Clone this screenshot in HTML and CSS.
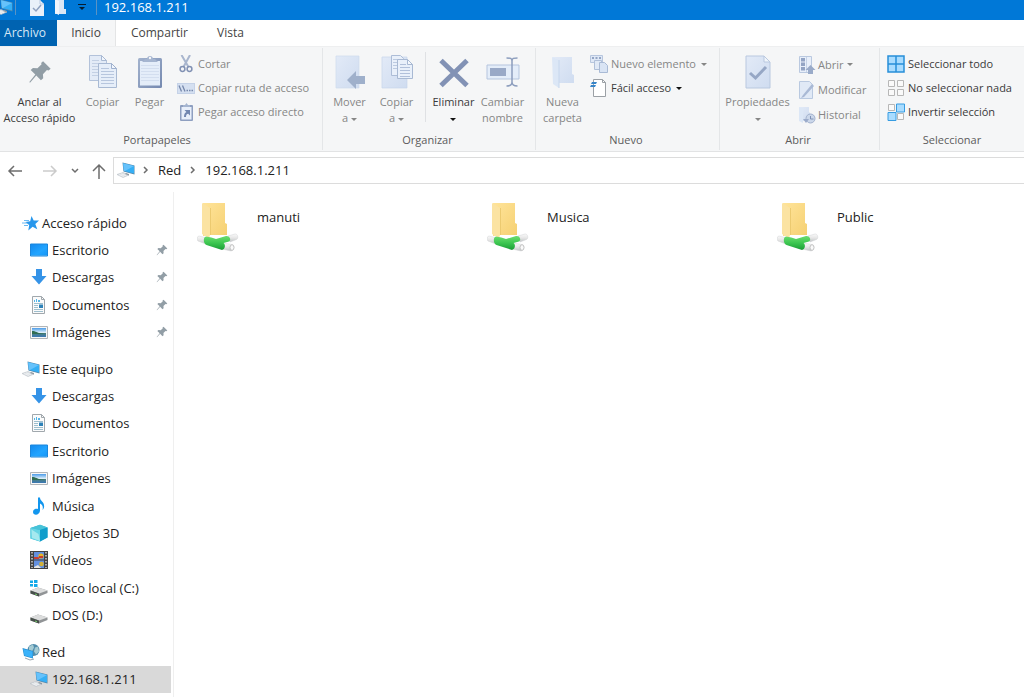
FILE: index.html
```html
<!DOCTYPE html>
<html lang="es">
<head>
<meta charset="utf-8">
<title>192.168.1.211</title>
<link rel="stylesheet" href="styles.css">
</head>
<body>
<svg class="sprite" aria-hidden="true">
  <defs>
    <linearGradient id="g-blue" x1="0" y1="0" x2="1" y2="1"><stop offset="0" stop-color="#1389ee"/><stop offset=".6" stop-color="#22a5ff"/><stop offset="1" stop-color="#1595f6"/></linearGradient>
    <linearGradient id="g-pale" x1="0" y1="0" x2="1" y2="1"><stop offset="0" stop-color="#e2eaf7"/><stop offset="1" stop-color="#cfdcf0"/></linearGradient>
    <linearGradient id="g-frame" x1="0" y1="0" x2="1" y2="1"><stop offset="0" stop-color="#a3b3ce"/><stop offset="1" stop-color="#7589b0"/></linearGradient>
    <linearGradient id="g-folder" x1="0" y1="0" x2="1" y2="1"><stop offset="0" stop-color="#ffe49a"/><stop offset="1" stop-color="#f5d072"/></linearGradient>
    <linearGradient id="g-green" x1="0" y1="0" x2="0" y2="1"><stop offset="0" stop-color="#6ddd70"/><stop offset=".5" stop-color="#3cc650"/><stop offset="1" stop-color="#1a9c36"/></linearGradient>
    <linearGradient id="g-pipe" x1="0" y1="0" x2="0" y2="1"><stop offset="0" stop-color="#fafafa"/><stop offset=".5" stop-color="#e6e6e6"/><stop offset="1" stop-color="#bfc2c4"/></linearGradient>
    <linearGradient id="g-photo" x1="0" y1="0" x2="0" y2="1"><stop offset="0" stop-color="#4b9be8"/><stop offset=".5" stop-color="#dceefa"/><stop offset=".55" stop-color="#4c8178"/><stop offset="1" stop-color="#3a78b8"/></linearGradient>
  </defs>
  <symbol id="pc" viewBox="0 0 18 18">
    <path d="M0 13.500l6-2 6 2.500-6 2.500z" fill="#dde2e6" stroke="#b9c0c6" stroke-width=".6"/><path d="M2 13.500l5 2M4 12.800l5 2" stroke="#f8f8f8" stroke-width=".6"/>
    <path d="M9 12l3 1v1.500L8 13z" fill="#8f99a2"/>
    <path d="M5.500 1.500l12 3v9l-11-3z" fill="#5487aa"/><path d="M6.100 2.300L17 5v7.600L7 9.900z" fill="#35aff5"/><path d="M6.100 2.300L17 5 8 10.100l-1-.2z" fill="#66c2fb"/>
  </symbol>
  <symbol id="pin" viewBox="0 0 18 18">
    <path d="M11.300 1l5.700 5.600-1.600 1.300-1.200-.4-3 3.100.2 3.100-1.700 1.500-3.500-3.500L1.500 17 1 16.500l4.500-5.600L2 7.500 3.700 6l3.400.2 3.100-3-.4-1z" fill="#929ea6"/>
  </symbol>
  <symbol id="sheet-copy" viewBox="0 0 30 34">
    <path d="M1.500.500h12l5 5v20h-17z" fill="#e3ebf7" stroke="#b3c2da"/><path d="M13.500.500v5h5z" fill="#f2f6fc" stroke="#a8b9d3"/>
    <path d="M4 5.500h7M4 8.500h11M4 11.500h11M4 14.500h11M4 17.500h11M4 20.500h11" stroke="#c3d0e4"/>
    <path d="M10.500 8.500h13l5 5v19h-18z" fill="#e6eef9" stroke="#a8b9d3"/><path d="M23.500 8.500v5h5z" fill="#f2f6fc" stroke="#9fb1ce"/>
    <path d="M13 13.500h8M13 16.500h13M13 19.500h13M13 22.500h13M13 25.500h13M13 28.500h13" stroke="#b7c6de"/>
  </symbol>
  <symbol id="clip" viewBox="0 0 26 34">
    <rect x="1" y="3" width="24" height="30" rx="1.500" fill="url(#g-frame)"/><rect x="3" y="6" width="20" height="24.500" fill="#e4edf9"/>
    <path d="M4 10.500h18M4 13.500h18M4 16.500h18M4 19.500h18M4 22.500h18M4 25.500h18" stroke="#d3deef"/><path d="M5 7l3-3h2c0-4 6-4 6 0h2l3 3z" fill="#a5b5d0"/><circle cx="13" cy="3" r="1.200" fill="#f5f6f8"/>
  </symbol>
  <symbol id="cut" viewBox="0 0 18 18"><path d="M4.500 0l7 12M13 0L6.500 12" stroke="#a9b6ce" stroke-width="2" fill="none"/><circle cx="5.500" cy="14" r="2.400" fill="none" stroke="#8292b4" stroke-width="1.500"/><circle cx="12.500" cy="14" r="2.400" fill="none" stroke="#8292b4" stroke-width="1.500"/></symbol>
  <symbol id="route" viewBox="0 0 18 18"><rect x=".5" y="4.500" width="17" height="10" fill="#d5e0f1" stroke="#c5d2e7"/><path d="M2 6.500l2.500 6M5.500 6.500l2.500 6" stroke="#7587ab" stroke-width="1.300"/><path d="M9.500 11.500h1.500M12 11.500h1.500M14.500 11.500h1.500" stroke="#7587ab" stroke-width="1.300"/></symbol>
  <symbol id="pastelink" viewBox="0 0 18 18"><rect x="3" y="2" width="13" height="16" rx="1" fill="#8e9fc0"/><rect x="4.500" y="4" width="10" height="12.500" fill="#e8effa"/><path d="M6 4V2h2l1.500-2L11 2h2v2z" fill="#a5b5d0"/><path d="M7.500 7H13v5.500l-1.800-1.800c-1.700.3-2.200 1.300-2.200 3.300H7c0-3 .8-4.200 2.400-5.100z" fill="#7287b0"/></symbol>
  <symbol id="move" viewBox="0 0 34 34"><path d="M3 1h23v32H3z" fill="url(#g-pale)" stroke="#cfdbed" stroke-width=".7"/><path d="M14 25l9-9v5h9v8h-9v5z" fill="#9fb0cb"/></symbol>
  <symbol id="copyto" viewBox="0 0 34 34"><path d="M2 2h25v31H2z" fill="url(#g-pale)" stroke="#c7d5eb" stroke-width=".7"/><path d="M11.500.500h9l3 3v17h-12z" fill="#e9f0fa" stroke="#adbdd7"/><path d="M13 4.500h6M13 7.500h6M13 10.500h5M13 13.500h5" stroke="#bccae0"/><path d="M17.500 4.500h10l5 5v14h-15z" fill="#e9f0fa" stroke="#a8b9d3"/><path d="M27.500 4.500v5h5z" fill="#f5f8fd" stroke="#a8b9d3"/><path d="M20 9.500h6M20 12.500h10M20 15.500h10M20 18.500h10M20 21.500h10" stroke="#b1c0da"/></symbol>
  <symbol id="delete" viewBox="0 0 34 34"><path d="M4 5.500l26 25M30 5.500l-26 25" stroke="#8292b5" stroke-width="5"/></symbol>
  <symbol id="rename" viewBox="0 0 34 34"><path d="M1 10h32v14H1z" fill="#e4edf9" stroke="#b5c5de"/><path d="M4 13h16v8H4z" fill="#99a9c7"/><path d="M20.500 3c4 0 5.500 0 5.500 3v21c0 3-1.500 4-5.500 4M31.500 3C27.500 3 26 3 26 6v21c0 3 1.500 4 5.500 4" fill="none" stroke="#8c9dbd" stroke-width="1.500"/></symbol>
  <symbol id="newfolder" viewBox="0 0 24 34"><path d="M2 2h19v17l2 1v8H8L2 29z" fill="url(#g-pale)"/><path d="M1 2l7 3v28l-6-4z" fill="#dce7f6"/><path d="M8 5v28" stroke="#c6d6ed"/></symbol>
  <symbol id="newitem" viewBox="0 0 18 18"><path d="M.5.500h12v7H.5z" fill="#dfe8f6" stroke="#b7c6de"/><path d="M2 2h2v2H2zM5.500 2h2v2h-2zM9 2h2v2H9z" fill="#93a5c5"/><path d="M4.500 5.500h7v9h-7z" fill="#e0e9f6" stroke="#b0c0d9"/><path d="M9.500 7.500h5l3 3v7h-8z" fill="#d9e4f4" stroke="#a9bad5"/></symbol>
  <symbol id="easy" viewBox="0 0 18 18"><path d="M3.500.500h9l3 3v14h-12z" fill="#fff" stroke="#9ba0a5"/><path d="M12.500.500v3h3" fill="none" stroke="#9ba0a5"/><path d="M2 3h5L6 5H1zM1 6h5L5 8H0z" fill="#3885c8"/></symbol>
  <symbol id="props" viewBox="0 0 26 34"><path d="M1 1h18l6 6v26H1z" fill="url(#g-pale)" stroke="#b9c8df"/><path d="M19 1v6h6z" fill="#f0f5fb" stroke="#b9c8df"/><path d="M5 18l5.500 5L21 12" fill="none" stroke="#96a7c5" stroke-width="3"/></symbol>
  <symbol id="open" viewBox="0 0 18 18"><path d="M1.500.500h12v16h-12z" fill="#e8effa" stroke="#bac9e0"/><path d="M3 2h4v3.500H3zM3 6.500h4v3.500H3zM3 11h4v3.500H3z" fill="#93a4c4"/><path d="M8.500 1v15" stroke="#c6d3e7"/><path d="M12.500 9l5 5H15v4h-5v-4H7.500z" fill="#9aabc9"/></symbol>
  <symbol id="edit" viewBox="0 0 18 18"><path d="M1.500.500h10l3 3v14h-13z" fill="#e0e9f6" stroke="#b9c9e0"/><path d="M5 14l-2 3 3-1L16 5l-2-2z" fill="#a9b9d5"/></symbol>
  <symbol id="history" viewBox="0 0 18 18"><path d="M1 1h10v5l1 1v8H1z" fill="url(#g-pale)"/><path d="M1 1l4 2v14l-4-2z" fill="#dce7f6"/><circle cx="12.500" cy="12.500" r="4.500" fill="#cbd7ea" stroke="#a1b1cd"/><path d="M12.500 10v3h3" fill="none" stroke="#7f91b5"/><path d="M5 13h6l-3 4z" fill="#9babca"/></symbol>
  <symbol id="selall" viewBox="0 0 18 18"><path d="M1 1h16v16H1z" fill="#a9dcff" stroke="#278fd9" stroke-width="1.500"/><path d="M9 1v16M1 9h16" stroke="#278fd9" stroke-width="1.500"/></symbol>
  <symbol id="selnone" viewBox="0 0 18 18"><path d="M1.500 1.500h6v6h-6zM10.500 1.500h6v6h-6zM1.500 10.500h6v6h-6zM10.500 10.500h6v6h-6z" fill="#fafafa" stroke="#b7b7b7"/></symbol>
  <symbol id="selinv" viewBox="0 0 18 18"><path d="M1.500 1.500h6v6h-6zM10.500 10.500h6v6h-6z" fill="#fafafa" stroke="#b7b7b7"/><path d="M9.500 1h8v8h-8zM1 9.500h8v8H1z" fill="#a9dcff" stroke="#369ce2"/></symbol>
  <symbol id="star" viewBox="0 0 18 18"><path d="M9.500 2l2.200 4.600 5.300-.2-3.700 3.700 2 5.100-4.700-2.400-4.300 3.600.9-5.300-4-3.100 5-.8z" fill="#2797ec"/><path d="M2 6.500h5M0 9h5M2 11.500h4" stroke="#6bb9f2"/></symbol>
  <symbol id="desktop" viewBox="0 0 18 18"><path d="M.5 3h17v12H.5z" fill="url(#g-blue)" stroke="#1a86dc"/><path d="M1 14.500h16" stroke="#3fa3ec"/></symbol>
  <symbol id="down" viewBox="0 0 18 18"><path d="M6 1h6v7h4.500L9 16.500 1.500 8H6z" fill="#3593e7"/></symbol>
  <symbol id="doc" viewBox="0 0 18 18"><path d="M2.500.500h9l3 3v14h-12z" fill="#fbfbfb" stroke="#a1a8ad"/><path d="M11.500.500v3h3" fill="none" stroke="#a1a8ad"/><path d="M4 6V4h1v2h1V3h1v3h1V4h2v2z" fill="#54b5e7"/><path d="M4 7.500h9M4 9.500h4M4 11.500h4M4 13.500h9M4 15.500h9" stroke="#9ebfce"/><path d="M9 8.500h4V12H9z" fill="#2e82b8"/></symbol>
  <symbol id="photo" viewBox="0 0 18 18"><path d="M.5 3.500h17v12H.5z" fill="#f7f7f7" stroke="#b1b5b8"/><path d="M2 5h14v9H2z" fill="url(#g-photo)"/><path d="M2 8c4 0 5 2 10 2.500l4 .5H2z" fill="#316d53"/></symbol>
  <symbol id="music" viewBox="0 0 18 18"><path d="M8 .500h2c0 4 5 4 4 10-.3 1-1 2-1.500 2.500 1-4-.5-5.500-2.500-6.500v7c0 5-7 5.500-7 1.500 0-3 3-3.500 5-3z" fill="#1296ee"/></symbol>
  <symbol id="cube" viewBox="0 0 18 18"><path d="M.5 4L10 .800l7.500 2.700v10L10 17.500.500 14.500z" fill="#29afd0"/><path d="M.5 4L10 .800l7.500 2.700L10 6z" fill="#48c3d8"/><path d="M.5 4L10 6v11.500L.500 14.500z" fill="#67d5e4"/><path d="M1.500 5.500L8.500 10 10 17l-8-3z" fill="#a5e9ef"/><path d="M10 6l7.500-2.500v10L10 17.500z" fill="#119dcb"/></symbol>
  <symbol id="film" viewBox="0 0 18 18"><path d="M0 0h18v18H0z" fill="#424242"/><path d="M4 1h10v7.500H4zM4 9.500h10V17H4z" fill="#6390df"/><path d="M2 1v16M16 1v16" stroke="#d1d1d1" stroke-width="1.500" stroke-dasharray="1.500 1.500"/><path d="M4 6h5v2H4z" fill="#c93d34"/><circle cx="11" cy="5" r="2.600" fill="#e5b527"/><path d="M9 5h4v2H9z" fill="#c83e30"/><circle cx="11.500" cy="13" r="2.300" fill="#d3b136"/><path d="M4 16l4-2 3 3H4z" fill="#e8e7e2"/></symbol>
  <symbol id="disk" viewBox="0 0 18 18"><path d="M.5 11.500L8 8.500l9.500 3v2.500L9 17.500.500 14.500z" fill="#919496"/><path d="M.5 11.500L8 8.500l9.500 3L9 14.500z" fill="#dcdddd"/><path d="M.5 11.500L9 14.500v3L.500 14.500z" fill="#48504b"/><path d="M5 15l2 .7" stroke="#74c86a"/></symbol>
  <symbol id="windisk" viewBox="0 0 18 18"><use href="#disk"/><path d="M0 1.500h3V4H0zM4 1h3.500v3H4zM0 5h3v2.500H0zM4 5h3.500v3H4z" fill="#13a9e9"/></symbol>
  <symbol id="network" viewBox="0 0 18 18"><circle cx="11.500" cy="7" r="6" fill="#518dac"/><path d="M7 3.500l4-2 1 3-2 4-3-1zM13 4.500l3-1 1 5-3 3-2-3z" fill="#a5cbd3"/><path d="M.5 5l10.500 3v7.500L2 13z" fill="#268dce"/><path d="M1.200 6l9.300 2.600v6.200L2.500 12.500z" fill="#3ab2fa"/><path d="M3 15l5 2 4-1" stroke="#9ba7af" fill="none"/></symbol>
  <symbol id="netfolder" viewBox="0 0 42 52">
    <path d="M6 3h22v20l2 1v11H13l-7 1z" fill="url(#g-folder)"/><path d="M5 3l8 5v27l-1 3-7-4z" fill="#fbe3a2"/><path d="M13.500 8v27" stroke="#ecca70"/>
    <path d="M2 36l8 2-1 6-8-3c-1.500-1-1-5 1-5z" fill="url(#g-pipe)" stroke="#d3d5d6" stroke-width=".5"/>
    <path d="M31 36l7-2c2.500-.5 4 4 1.500 5.500L33 42z" fill="url(#g-pipe)" stroke="#d3d5d6" stroke-width=".5"/>
    <path d="M26 43l9 1.500c3 1 2 6-1 6.500l-9-2z" fill="url(#g-pipe)" stroke="#d3d5d6" stroke-width=".5"/>
    <path d="M9 36.500c4 .5 7 1.500 10 2.500l10-3c4-.5 5.500 4 3 5.500L26.500 43c2.500 1.500 1.500 6.500-1.500 7L9.500 45C6 43.500 6 37 9 36.500z" fill="url(#g-green)"/><ellipse cx="35" cy="47.500" rx="2" ry="2.800" fill="#fafafa" stroke="#c3c3c3"/>
  </symbol>
</svg>

<header class="titlebar">
  <svg class="i18"><use href="#pc"/></svg><span class="bar"></span>
  <button class="quick" aria-label="Propiedades"><svg class="quick-page" viewBox="0 0 14 18"><path d="M0 1h10l4 4v12H0z" fill="#e9f0f9"/><path d="M10 1v4h4" fill="none" stroke="#b9c8df"/><path d="M3 9l3 3 5-6" fill="none" stroke="#8fa1c0" stroke-width="1.500"/></svg></button>
  <button class="quick" aria-label="Nueva carpeta"><svg class="quick-page" viewBox="0 0 14 18"><path d="M1 0h9v10h2v5H1z" fill="#dce7f5"/><path d="M1 0l4 2v14l-4-2z" fill="#f0f5fc"/></svg></button>
  <button class="quick" aria-label="Personalizar"><svg class="tiny" viewBox="0 0 8 8"><path d="M0 1.500h8" stroke="#071d31"/><path d="M1 4h6L4 7z" fill="#071d31"/></svg></button>
  <span class="bar"></span><h1>192.168.1.211</h1>
</header>
<nav class="tabs"><button class="tab file">Archivo</button><button class="tab active">Inicio</button><button class="tab share">Compartir</button><button class="tab">Vista</button></nav>

<section class="ribbon">
  <div class="group g-clip"><div class="tools">
    <button class="big on pinbtn"><svg class="pinlarge"><use href="#pin"/></svg><span>Anclar al<br>Acceso rápido</span></button>
    <button class="big"><svg><use href="#sheet-copy"/></svg><span>Copiar</span></button>
    <button class="big"><svg><use href="#clip"/></svg><span>Pegar</span></button>
    <div class="stack"><button><svg><use href="#cut"/></svg>Cortar</button><button><svg><use href="#route"/></svg>Copiar ruta de acceso</button><button><svg><use href="#pastelink"/></svg>Pegar acceso directo</button></div>
  </div><h2>Portapapeles</h2></div>
  <div class="group g-org"><div class="tools">
    <button class="big"><svg><use href="#move"/></svg><span>Mover<br>a <i class="caret"></i></span></button>
    <button class="big"><svg><use href="#copyto"/></svg><span>Copiar<br>a <i class="caret"></i></span></button>
    <span class="split"></span>
    <button class="big on"><svg><use href="#delete"/></svg><span>Eliminar<br><i class="caret"></i></span></button>
    <button class="big"><svg><use href="#rename"/></svg><span>Cambiar<br>nombre</span></button>
  </div><h2>Organizar</h2></div>
  <div class="group g-new"><div class="tools">
    <button class="big"><svg><use href="#newfolder"/></svg><span>Nueva<br>carpeta</span></button>
    <div class="stack"><button><svg><use href="#newitem"/></svg>Nuevo elemento <i class="caret"></i></button><button class="on"><svg><use href="#easy"/></svg>Fácil acceso <i class="caret"></i></button></div>
  </div><h2>Nuevo</h2></div>
  <div class="group g-open"><div class="tools">
    <button class="big props"><svg><use href="#props"/></svg><span>Propiedades<br><i class="caret"></i></span></button>
    <div class="stack loose"><button><svg><use href="#open"/></svg>Abrir <i class="caret"></i></button><button><svg><use href="#edit"/></svg>Modificar</button><button><svg><use href="#history"/></svg>Historial</button></div>
  </div><h2>Abrir</h2></div>
  <div class="group g-select"><div class="tools"><div class="stack">
    <button class="on"><svg><use href="#selall"/></svg>Seleccionar todo</button><button class="on"><svg><use href="#selnone"/></svg>No seleccionar nada</button><button class="on"><svg><use href="#selinv"/></svg>Invertir selección</button></div>
  </div><h2>Seleccionar</h2></div>
</section>

<div class="location">
  <div class="history">
    <button aria-label="Atrás"><svg class="arrow" viewBox="0 0 16 16"><path d="M15 8H2M7 3L2 8l5 5"/></svg></button>
    <button class="off" aria-label="Adelante"><svg class="arrow" viewBox="0 0 16 16"><path d="M1 8h13M9 3l5 5-5 5"/></svg></button>
    <button class="recent" aria-label="Ubicaciones recientes"><svg class="chev" viewBox="0 0 8 8"><path d="M1 2l3 3 3-3"/></svg></button>
    <button class="up" aria-label="Subir"><svg class="arrow" viewBox="0 0 16 16"><path d="M8 16V2M2 8l6-6 6 6"/></svg></button>
  </div>
  <div class="address"><svg class="i18"><use href="#pc"/></svg><svg class="chev" viewBox="0 0 8 8"><path d="M2 1l3 3-3 3"/></svg><a href="#">Red</a><svg class="chev" viewBox="0 0 8 8"><path d="M2 1l3 3-3 3"/></svg><a href="#">192.168.1.211</a></div>
</div>

<div class="body">
  <nav class="side">
    <div class="branch">
      <a class="root" href="#"><svg><use href="#star"/></svg>Acceso rápido</a>
      <a href="#"><svg><use href="#desktop"/></svg>Escritorio<svg class="pin"><use href="#pin"/></svg></a>
      <a href="#"><svg><use href="#down"/></svg>Descargas<svg class="pin"><use href="#pin"/></svg></a>
      <a href="#"><svg><use href="#doc"/></svg>Documentos<svg class="pin"><use href="#pin"/></svg></a>
      <a href="#"><svg><use href="#photo"/></svg>Imágenes<svg class="pin"><use href="#pin"/></svg></a>
    </div>
    <div class="branch computer">
      <a class="root" href="#"><svg><use href="#pc"/></svg>Este equipo</a>
      <a href="#"><svg><use href="#down"/></svg>Descargas</a>
      <a href="#"><svg><use href="#doc"/></svg>Documentos</a>
      <a href="#"><svg><use href="#desktop"/></svg>Escritorio</a>
      <a href="#"><svg><use href="#photo"/></svg>Imágenes</a>
      <a href="#"><svg><use href="#music"/></svg>Música</a>
      <a href="#"><svg><use href="#cube"/></svg>Objetos 3D</a>
      <a href="#"><svg><use href="#film"/></svg>Vídeos</a>
      <a href="#"><svg><use href="#windisk"/></svg>Disco local (C:)</a>
      <a href="#"><svg><use href="#disk"/></svg>DOS (D:)</a>
    </div>
    <div class="branch net">
      <a class="root" href="#"><svg><use href="#network"/></svg>Red</a>
      <a class="selected" href="#"><svg><use href="#pc"/></svg>192.168.1.211</a>
    </div>
  </nav>
  <main class="files">
    <a href="#"><svg><use href="#netfolder"/></svg>manuti</a>
    <a href="#"><svg><use href="#netfolder"/></svg>Musica</a>
    <a href="#"><svg><use href="#netfolder"/></svg>Public</a>
  </main>
</div>
</body>
</html>
```
FILE: styles.css
```css
* { box-sizing: border-box; }
body { margin: 0; min-height: 100vh; display: flex; flex-direction: column; overflow-x: hidden; background: #fff; color: #222; font: 13px/20px "Open Sans", "Noto Sans", sans-serif; }
button { border: 0; padding: 0; margin: 0; background: none; color: inherit; font: inherit; }
a { color: inherit; text-decoration: none; }
h1, h2 { margin: 0; font-weight: 400; }
svg { display: block; flex: none; }
.sprite { position: absolute; width: 0; height: 0; }
.i18 { width: 18px; height: 18px; }

.titlebar { height: 20px; display: flex; align-items: center; background: #0078d7; color: #fff; overflow: hidden; padding-bottom: 6px; }
.titlebar > .i18 { margin-left: -5px; }
.titlebar h1 { font-size: 13px; line-height: 16px; margin-left: 5px; }
.bar { width: 1px; height: 16px; margin: 0 2px; background: #5a93c4; }
.quick { width: 24px; height: 16px; display: grid; place-items: center; }
.titlebar .quick:nth-of-type(1) { margin-left: 7px; }
.titlebar .quick:nth-of-type(3) { margin-right: 3px; width: 18px; }
.quick-page { width: 14px; height: 18px; }
.tiny { width: 8px; height: 8px; }

.tabs { display: flex; height: 26px; background: #fff; color: #444; font-size: 12px; }
.tab { padding: 0 14px; }
.file { width: 57px; padding: 0 7px 0 0; background: #0063b1; color: #d7e8f6; }
.active { width: 59px; padding: 0; background: #f5f6f7; border-right: 1px solid #e4e5e6; }
.share { width: 87px; padding: 0; }

.ribbon { display: flex; height: 106px; padding: 1px 0; background: #f5f6f7; border-top: 1px solid #eeeff0; border-bottom: 1px solid #e2e3e4; font-size: 11px; line-height: 16px; color: #868686; }
.group { flex: none; display: flex; flex-direction: column; border-right: 1px solid #e4e6e8; }
.tools { display: flex; flex: 1; padding-top: 4px; }
.group h2 { font-size: 11px; line-height: 16px; text-align: center; color: #5c5c5c; padding-bottom: 2px; white-space: nowrap; }
.g-clip { width: 323px; }
.g-clip h2 { padding-right: 8px; }
.g-org { width: 213px; }
.g-new { width: 184px; }
.g-open { width: 160px; }
.g-org h2, .g-new h2, .g-open h2 { padding-right: 3px; }
.g-select { flex: 1 0 144px; border-right: 0; }
.big { width: 47px; display: flex; flex-direction: column; align-items: center; white-space: nowrap; line-height: 16px; }
.big svg { width: 34px; height: 34px; margin: 3px 0 5px; }
.big .pinlarge { width: 24px; height: 24px; margin: 8px 0 10px; }
.pinbtn { width: 79px; }
.on { color: #3a3a3a; }
.props { width: 69px; }
.g-org .tools, .g-new .tools, .g-open .tools { padding-left: 3px; }
.split { width: 1px; height: 70px; margin: 0 3px 0 5px; background: #dfe1e4; }
.split ~ .big { width: 49px; }
.stack { display: flex; flex-direction: column; padding-left: 4px; }
.stack button { height: 24px; display: flex; align-items: center; gap: 3px; white-space: nowrap; }
.loose button { height: 25px; gap: 2px; }
.g-select .stack { padding-left: 7px; }
.stack svg { width: 18px; height: 18px; }
.stack .caret { margin-left: 2px; }
.loose { padding-left: 6px; }
.caret { display: inline-block; vertical-align: middle; border: 3px solid transparent; border-top-color: currentColor; border-bottom: 0; }
.on .caret { border-top-color: #111; }

.location { display: flex; align-items: center; padding-top: 5px; }
.history { width: 113px; display: flex; align-items: center; padding-left: 7px; }
.history button { width: 16px; display: grid; place-items: center; }
.history .off { margin-left: 19px; opacity: .35; }
.history .recent { margin-left: 9px; }
.history .up { margin-left: 8px; }
.arrow { width: 16px; height: 16px; fill: none; stroke: #6d6d6d; stroke-width: 1.500; }
.chev { width: 8px; height: 8px; fill: none; stroke: #6d6d6d; stroke-width: 1.500; }
.address { flex: 1; height: 27px; display: flex; align-items: center; gap: 8px; padding: 0 0 2px 3px; border: 1px solid #dcdcdc; border-right: 0; }
.address .i18 { margin-right: -1px; }

.body { flex: 1; display: flex; padding-top: 8px; }
.side { width: 174px; flex: none; border-right: 1px solid #efefef; padding: 17px 2px 4px 0; display: flex; flex-direction: column; gap: 9px; }
.branch { display: grid; grid-auto-rows: 1fr; min-height: 137px; }
.computer { min-height: 274px; }
.net { min-height: 55px; }
.branch a { display: flex; align-items: center; padding-left: 30px; gap: 4px; white-space: nowrap; }
.branch .root { padding-left: 22px; gap: 2px; }
.branch svg { width: 18px; height: 18px; }
.branch .pin { width: 12px; height: 12px; margin: 0 3px 0 auto; }
.selected { background: #d9d9d9; }
.files { flex: 1; display: grid; grid-template-columns: repeat(auto-fill, 240px); column-gap: 50px; align-content: start; padding: 8px 0 0 23px; }
.files a { display: flex; gap: 18px; line-height: 34px; align-items: start; }
.files svg { width: 42px; height: 52px; }
```
